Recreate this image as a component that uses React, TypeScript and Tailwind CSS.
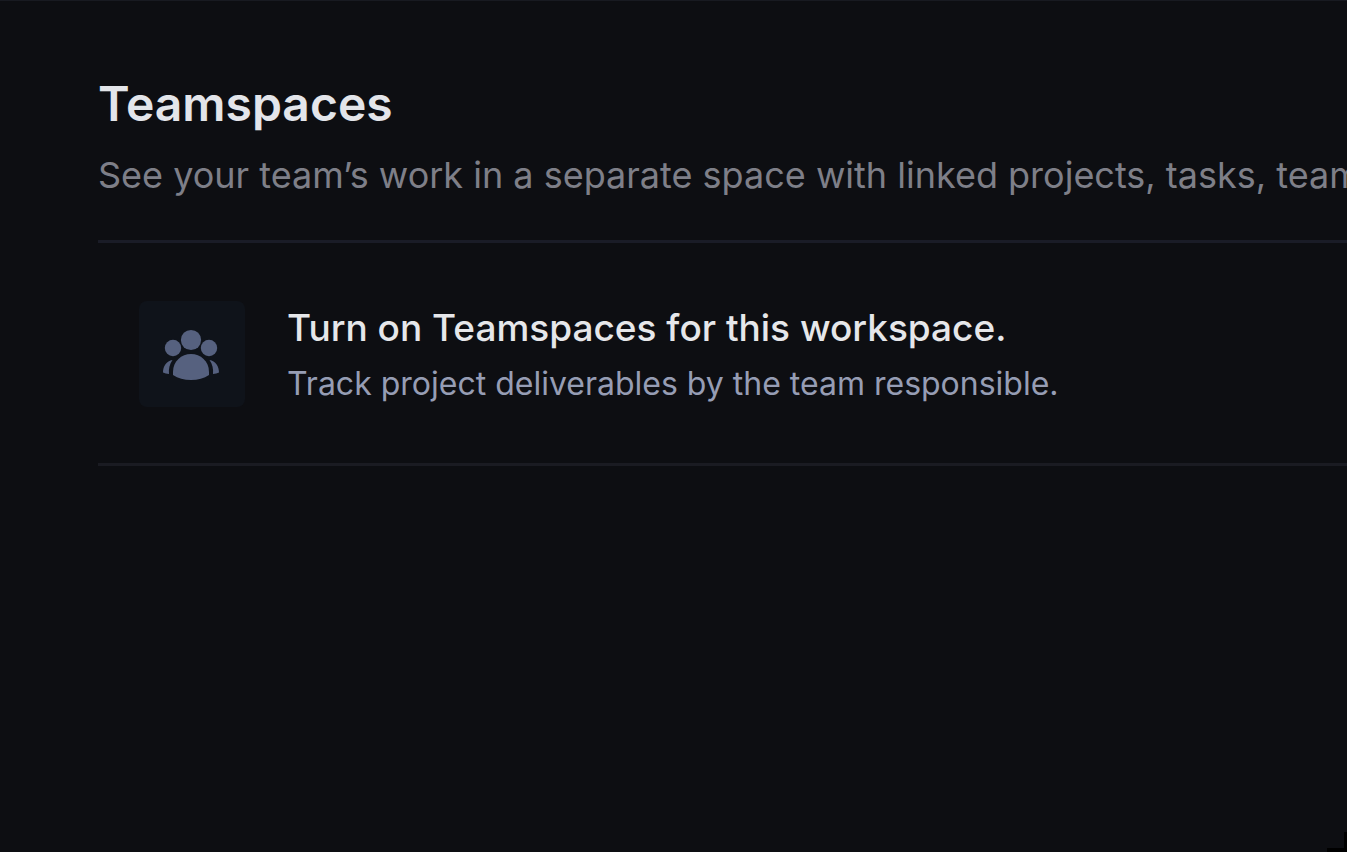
function TeamIcon() {
  return (
    <svg viewBox="0 0 58 54" className="h-[54px] w-[58px]" fill="#56617f" aria-hidden="true">
      <circle cx="28" cy="13" r="10.1" />
      <circle cx="10" cy="21" r="8.2" />
      <circle cx="46" cy="21" r="8.2" />
      <path d="M28 27C37.5 27 46 34 46 45V48C41 51.6 35 53 28 53S15 51.6 10 48V45C10 34 18.5 27 28 27Z" />
      <path d="M9.5 33C3.5 34 0 39 0 45.6Q2.5 46.8 6 47C5.5 42 6.5 37 9.5 33Z" />
      <path d="M46.5 33C52.5 34 56 39 56 45.6Q53.5 46.8 50 47C50.5 42 49.5 37 46.5 33Z" />
    </svg>
  );
}

export default function App() {
  return (
    <main className="relative min-h-screen overflow-hidden border-t border-[#181a21] bg-[#0d0e12] pt-[72px] pl-[98px] font-['Inter',sans-serif]">
      <header className="border-b-3 border-[#1a1c27] pb-[43px]">
        <h1 className="text-[48px] leading-[62px] font-semibold text-[#e3e5ea]">Teamspaces</h1>
        <p className="mt-[18px] text-[36px] leading-[44px] whitespace-nowrap text-[#7e7f88]">
          See your team’s work in a separate space with linked projects, tasks, team
        </p>
      </header>
      <section className="flex items-center gap-[42px] border-b-3 border-[#1a1b22] pt-[58px] pb-14 pl-[41px]">
        <div className="flex size-[106px] shrink-0 items-center justify-center rounded-lg bg-[#0f131a]">
          <TeamIcon />
        </div>
        <div className="whitespace-nowrap">
          <h2 className="text-[37px] leading-[48px] font-medium text-[#e6e7ea]">
            Turn on Teamspaces for this workspace.
          </h2>
          <p className="mt-3 text-[32px] leading-[40px] text-[#969db4]">
            Track project deliverables by the team responsible.
          </p>
        </div>
      </section>
      <div className="absolute right-0 bottom-0 h-1 w-5 bg-black" />
      <div className="absolute right-0 bottom-0 h-5 w-[3px] bg-black" />
    </main>
  );
}
